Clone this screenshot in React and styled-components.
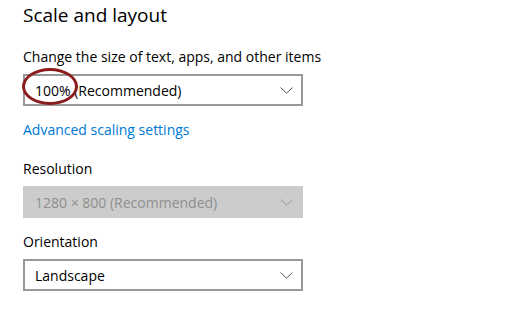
import React from 'react'
import styled, { createGlobalStyle } from 'styled-components'

const Global = createGlobalStyle`
  body {
    margin: 0;
    background: #fff;
    font-family: "Open Sans", "Noto Sans", sans-serif;
  }
`;

const Page = styled.main`
  padding: 1px 0 0 23px;
  width: 526px;
  height: 312px;
  box-sizing: border-box;
  overflow: hidden;
`;

const Heading = styled.h2`
  margin: 0;
  font-size: 19px;
  font-weight: 400;
  line-height: 28px;
  color: #000;
`;

const Field = styled.section`
  margin-top: ${p => p.$gap || 0}px;
`;

const Label = styled.div`
  font-size: 14px;
  line-height: 20px;
  color: #000;
  margin-bottom: 7px;
`;

const Select = styled.div`
  position: relative;
  width: 280px;
  height: 32px;
  box-sizing: border-box;
  display: flex;
  align-items: center;
  justify-content: space-between;
  padding: 0 ${p => (p.$disabled ? 10 : 8)}px 0 ${p => (p.$disabled ? 12 : 10)}px;
  border: ${p => (p.$disabled ? 'none' : '2px solid #999')};
  background: ${p => (p.$disabled ? '#ccc' : '#fff')};
  color: ${p => (p.$disabled ? '#8f8f8f' : '#000')};
  font-size: 14px;
`;

const Chevron = styled.svg`
  width: 13px;
  height: 7px;
`;

const Circle = styled.span`
  position: absolute;
  left: -3px;
  top: -8px;
  width: 50px;
  height: 31px;
  border: 3px solid #8b1c1c;
  border-radius: 50%;
`;

const Link = styled.a`
  display: block;
  margin-top: 14px;
  font-size: 14px;
  line-height: 20px;
  color: #0078d7;
  text-decoration: none;
`;

const Arrow = ({ color }) => (
  <Chevron viewBox="0 0 13 7">
    <path d="M0.5 0.5 L6.5 6.2 L12.5 0.5" fill="none" stroke={color} strokeWidth="1" />
  </Chevron>
);

const App = () => {
  return (
    <>
      <Global />
      <Page>
        <Heading>Scale and layout</Heading>
        <Field $gap={18}>
          <Label>Change the size of text, apps, and other items</Label>
          <Select>
            <span>100% (Recommended)</span>
            <Arrow color="#555" />
            <Circle />
          </Select>
        </Field>
        <Link href="#">Advanced scaling settings</Link>
        <Field $gap={19}>
          <Label>Resolution</Label>
          <Select $disabled>
            <span>1280 × 800 (Recommended)</span>
            <Arrow color="#9a9a9a" />
          </Select>
        </Field>
        <Field $gap={14}>
          <Label>Orientation</Label>
          <Select>
            <span>Landscape</span>
            <Arrow color="#555" />
          </Select>
        </Field>
      </Page>
    </>
  )
}

export default App
